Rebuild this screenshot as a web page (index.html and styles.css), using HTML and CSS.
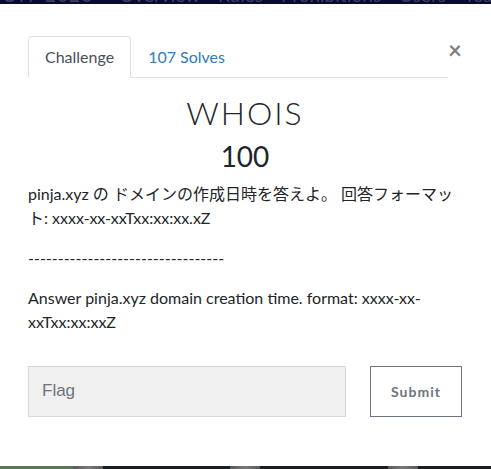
FILE: index.html
```html
<!DOCTYPE html>
<html lang="ja">
<head>
<meta charset="utf-8">
<title>WHOIS</title>
<link rel="stylesheet" href="styles.css">
</head>
<body>
<div class="topbar">
  <div class="topbar-inner">
    <span class="brand">CTF 2020</span>
    <span class="nav-link-bg">Overview</span>
    <span class="nav-link-bg">Rules</span>
    <span class="nav-link-bg">Prohibitions</span>
    <span class="nav-link-bg">Users</span>
    <span class="nav-link-bg">Teams</span>
    <span class="nav-link-bg">Scoreboard</span>
  </div>
</div>
<div class="modal">
  <div class="modal-head">
    <ul class="tabs">
      <li class="tab active">Challenge</li>
      <li class="tab link">107 Solves</li>
    </ul>
    <button class="close" type="button">×</button>
  </div>
  <h2 class="title">WHOIS</h2>
  <h3 class="value">100</h3>
  <div class="desc">
    <p>pinja.xyz の ドメインの作成日時を答えよ。 回答フォーマット: xxxx-xx-xxTxx:xx:xx.xZ</p>
    <p>---------------------------------</p>
    <p>Answer pinja.xyz domain creation time. format: xxxx-xx-xxTxx:xx:xxZ</p>
  </div>
  <div class="submit-row">
    <input class="flag" type="text" placeholder="Flag">
    <button class="submit" type="button">Submit</button>
  </div>
</div>
<div class="bottombar">
  <div class="seg green"></div>
  <div class="seg grey"></div>
  <div class="seg dark w127"></div>
  <div class="seg grey"></div>
  <div class="seg dark w128"></div>
  <div class="seg grey"></div>
  <div class="seg dark fill"></div>
</div>
</body>
</html>
```

FILE: styles.css
```css
html, body {
  margin: 0;
  padding: 0;
  background: #ffffff;
}
body {
  font-family: Lato, "Noto Sans CJK JP", sans-serif;
  color: #212529;
  font-size: 16px;
  line-height: 1.5;
  width: 491px;
  height: 469px;
  overflow: hidden;
}
.topbar {
  height: 4px;
  background: #0a0b30;
  overflow: hidden;
}
.topbar-inner {
  display: flex;
  gap: 18px;
  margin-top: -15px;
  padding-left: 2px;
  font-size: 19px;
  line-height: 20px;
  color: #3c3f62;
  white-space: nowrap;
}
.brand {
  margin-right: 8px;
  letter-spacing: 1px;
}
.modal {
  height: 462px;
  box-sizing: border-box;
  padding: 32px 29px 0 28px;
  background: #ffffff;
}
.modal-head {
  display: flex;
  align-items: flex-start;
}
.tabs {
  flex: 1;
  display: flex;
  list-style: none;
  margin: 0;
  padding: 0;
  border-bottom: 1px solid #dee2e6;
}
.tab {
  padding: 8px 16px;
  margin-bottom: -1px;
  border: 1px solid transparent;
  border-radius: 4px 4px 0 0;
}
.tab.active {
  color: #495057;
  background: #ffffff;
  border-color: #dee2e6 #dee2e6 #ffffff;
}
.tab.link {
  color: #337ab7;
}
.close {
  margin: 0;
  padding: 0;
  border: 0;
  background: transparent;
  font-family: Lato, sans-serif;
  font-size: 24px;
  font-weight: 700;
  line-height: 1;
  color: #000000;
  opacity: 0.5;
  margin-top: 2px;
}
.title {
  margin: 0 0 8px;
  padding-top: 16px;
  text-align: center;
  font-size: 32px;
  font-weight: 300;
  line-height: 1.2;
  letter-spacing: 2px;
}
.value {
  margin: 0 0 8px;
  text-align: center;
  font-size: 28px;
  font-weight: 400;
  line-height: 1.2;
}
.desc p {
  margin: 0 0 16px;
}
.submit-row {
  display: flex;
  gap: 24px;
  margin-top: 32px;
}
.flag {
  width: 318px;
  height: 51px;
  box-sizing: border-box;
  margin: 0;
  padding: 0 13px;
  background: #f0f0f0;
  border: 1px solid #d4d8dc;
  border-radius: 0;
  font-family: "Liberation Sans", Arial, sans-serif;
  font-size: 17px;
  color: #495057;
  outline: none;
}
.flag::placeholder {
  color: #6c757d;
  opacity: 1;
}
.submit {
  width: 92px;
  height: 51px;
  box-sizing: border-box;
  margin: 0;
  padding: 0;
  background: #ffffff;
  border: 1px solid #6c757d;
  border-radius: 0;
  font-family: Lato, sans-serif;
  font-size: 14px;
  font-weight: 700;
  letter-spacing: 1px;
  color: #6c757d;
}
.bottombar {
  display: flex;
  height: 3px;
}
.seg { height: 3px; }
.green { width: 73px; background: #587858; }
.grey { width: 30px; background: linear-gradient(90deg, #5a5a5a, #7a7a7a 50%, #5a5a5a); }
.dark { background: #1b1e21; }
.w127 { width: 127px; }
.w128 { width: 128px; }
.fill { flex: 1; }
```
